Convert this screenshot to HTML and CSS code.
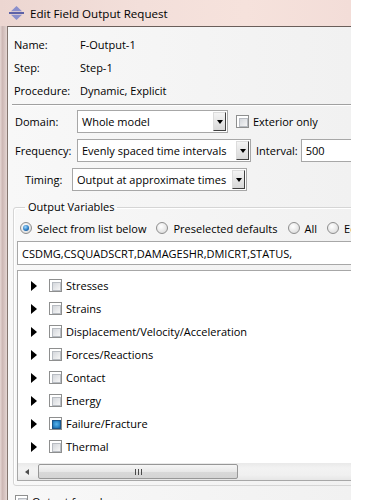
FILE: index.html
```html
<!DOCTYPE html>
<html>
<head>
<meta charset="utf-8">
<link rel="stylesheet" href="styles.css">
</head>
<body>
<div class="window">
  <div class="titlebar">
    <svg class="title-icon" width="15" height="14" viewBox="0 0 15 14">
      <path d="M7.5 0 L13 5.2 H2 Z" fill="#8a8fcc"/>
      <rect x="0" y="6" width="15" height="2" fill="#5d62a8"/>
      <path d="M2 8.8 H13 L7.5 14 Z" fill="#8a8fcc"/>
    </svg>
    <span class="title-text">Edit Field Output Request</span>
  </div>
  <div class="body">
    <div class="frame-left"></div>
    <div class="client">
      <div class="info">
        <div class="info-row"><span class="info-lbl">Name:</span><span>F-Output-1</span></div>
        <div class="info-row"><span class="info-lbl">Step:</span><span>Step-1</span></div>
        <div class="info-row"><span class="info-lbl">Procedure:</span><span>Dynamic, Explicit</span></div>
      </div>
      <div class="sep"></div>
      <div class="form">
        <div class="form-row row-domain">
          <span class="lbl lbl-wide">Domain:</span>
          <div class="select sel-domain"><span>Whole model</span><span class="arrow"></span></div>
          <span class="cb cb-ext"></span><span class="cb-text">Exterior only</span>
        </div>
        <div class="form-row row-freq">
          <span class="lbl lbl-wide">Frequency:</span>
          <div class="select sel-freq"><span>Evenly spaced time intervals</span><span class="arrow"></span></div>
          <span class="interval-lbl">Interval:</span>
          <div class="input interval">500</div>
        </div>
        <div class="form-row row-timing">
          <span class="lbl lbl-narrow">Timing:</span>
          <div class="select sel-timing"><span>Output at approximate times</span><span class="arrow"></span></div>
        </div>
      </div>
      <fieldset class="group">
        <legend class="group-title">Output Variables</legend>
        <div class="radios">
          <span class="radio on"></span><span class="radio-text">Select from list below</span>
          <span class="radio"></span><span class="radio-text">Preselected defaults</span>
          <span class="radio"></span><span class="radio-text">All</span>
          <span class="radio"></span><span class="radio-text">Edit variables</span>
        </div>
        <div class="input vars">CSDMG,CSQUADSCRT,DAMAGESHR,DMICRT,STATUS,</div>
        <div class="tree">
          <div class="tree-items">
            <div class="tree-row"><span class="tri"></span><span class="cb"></span><span class="tree-text">Stresses</span></div>
            <div class="tree-row"><span class="tri"></span><span class="cb"></span><span class="tree-text">Strains</span></div>
            <div class="tree-row"><span class="tri"></span><span class="cb"></span><span class="tree-text">Displacement/Velocity/Acceleration</span></div>
            <div class="tree-row"><span class="tri"></span><span class="cb"></span><span class="tree-text">Forces/Reactions</span></div>
            <div class="tree-row"><span class="tri"></span><span class="cb"></span><span class="tree-text">Contact</span></div>
            <div class="tree-row"><span class="tri"></span><span class="cb"></span><span class="tree-text">Energy</span></div>
            <div class="tree-row"><span class="tri"></span><span class="cb partial"></span><span class="tree-text">Failure/Fracture</span></div>
            <div class="tree-row"><span class="tri"></span><span class="cb"></span><span class="tree-text">Thermal</span></div>
            <div class="tree-row"><span class="tri"></span><span class="cb"></span><span class="tree-text">Volume/Thickness/Coordinates</span></div>
          </div>
          <div class="hscroll">
            <span class="sb-btn"><span class="sb-left"></span></span>
            <span class="thumb"><span class="grip"></span></span>
          </div>
        </div>
      </fieldset>
      <div class="rebar"><span class="cb"></span><span class="cb-text">Output for rebar</span></div>
    </div>
  </div>
</div>
</body>
</html>
```
FILE: styles.css
```css
* { box-sizing: border-box; }
html, body { margin: 0; padding: 0; background: #fff; }
body {
  width: 376px;
  height: 500px;
  overflow: hidden;
  font-family: "Open Sans", "Noto Sans", sans-serif;
  font-size: 11px;
  color: #000;
}
.window {
  width: 351px;
  height: 500px;
  display: flex;
  flex-direction: column;
  overflow: hidden;
}
.titlebar {
  height: 26px;
  flex: none;
  display: flex;
  align-items: center;
  background: linear-gradient(90deg, #ecd6d1 0%, #f3dfda 40%, #f6e2dc 70%, #f3ddd8 100%);
}
.title-icon { margin-left: 9px; flex: none; }
.title-text { margin-left: 6px; font-size: 11.6px; }
.body { flex: 1; display: flex; min-height: 0; }
.frame-left {
  width: 7px;
  flex: none;
  background: linear-gradient(90deg, #e6d7d4 0%, #cdb8b5 35%, #d9c7c4 70%, #e4d6d3 100%);
}
.client {
  flex: 1;
  min-width: 0;
  border-left: 1px solid #82756f;
  border-top: 1px solid #6a5e5a;
  background: linear-gradient(90deg, #f8f8f8, #f1f1f1);
  overflow: hidden;
}
.info { padding: 6px 0 0 6px; }
.info-row { height: 23px; display: flex; align-items: center; white-space: nowrap; }
.info-lbl { width: 66px; flex: none; }
.sep {
  margin: 2px 0 0 4px;
  height: 2px;
  border-top: 1px solid #a0a0a0;
  border-bottom: 1px solid #fff;
}
.form { margin-top: 4px; display: flex; flex-direction: column; gap: 6px; }
.form-row { height: 23px; display: flex; align-items: center; white-space: nowrap; }
.row-domain, .row-freq { padding-left: 7px; }
.row-timing { padding-left: 17px; }
.lbl-wide { width: 62px; flex: none; }
.lbl-narrow { width: 47px; flex: none; }
.select {
  height: 23px;
  flex: none;
  border: 1px solid #a7a7a7;
  background: #fff;
  display: flex;
  align-items: center;
  padding-left: 4px;
}
.sel-domain { width: 151px; }
.sel-freq { width: 174px; }
.sel-timing { width: 175px; }
.arrow {
  margin-left: auto;
  margin-right: 1px;
  width: 13px;
  height: 19px;
  border: 1px solid;
  border-color: #dcdcdc #404040 #404040 #dcdcdc;
  background: linear-gradient(#f4f4f4, #d8d8d8);
  display: flex;
  align-items: center;
  justify-content: center;
}
.arrow::before {
  content: "";
  border-left: 3.5px solid transparent;
  border-right: 3.5px solid transparent;
  border-top: 4px solid #000;
}
.cb {
  width: 13px;
  height: 13px;
  flex: none;
  border: 1px solid #8e8f8f;
  background: #fff;
  padding: 2px;
  display: inline-block;
}
.cb::after {
  content: "";
  display: block;
  width: 100%;
  height: 100%;
  border: 1px solid #b8bcc2;
  background: linear-gradient(135deg, #d4d7dc, #f6f6f6);
}
.cb.partial::after {
  border-color: #1b5589;
  background: radial-gradient(circle at 50% 45%, #5ab4ea 0, #2a86c8 60%, #1a5c98 100%);
}
.cb-ext { margin-left: 8px; }
.cb-text { margin-left: 4px; }
.interval-lbl { margin-left: 5px; }
.input {
  height: 23px;
  border: 1px solid #a7a7a7;
  background: #fff;
  display: flex;
  align-items: center;
  padding-left: 4px;
  white-space: nowrap;
}
.interval { margin-left: 3px; width: 80px; flex: none; }
.group {
  margin: 9px 0 0 5px;
  width: 360px;
  padding: 6px 0 4px 3px;
  border: 1px solid #d5d5d5;
  border-radius: 3px;
  box-shadow: inset 1px 1px 0 #fff;
  min-width: 0;
}
.group-title {
  margin-left: 8px;
  padding: 0 3px;
  line-height: 14px;
}
.radios { height: 16px; display: flex; align-items: center; padding-left: 3px; white-space: nowrap; }
.radio {
  width: 12px;
  height: 12px;
  flex: none;
  border-radius: 50%;
  border: 1px solid #8e8e8e;
  background: radial-gradient(circle at 40% 35%, #fff 0, #e6e6e6 60%, #cfcfcf 100%);
  display: flex;
  align-items: center;
  justify-content: center;
}
.radio.on::after {
  content: "";
  width: 6px;
  height: 6px;
  border-radius: 50%;
  background: radial-gradient(circle at 40% 35%, #a6dcff 0, #2a7cc4 55%, #0f3f78 100%);
}
.radio-text { margin-left: 5px; margin-right: 10px; }
.radio-text:first-of-type { margin-right: 9px; }
.vars { margin-top: 5px; height: 24px; }
.tree {
  margin-top: 5px;
  height: 211px;
  border: 1px solid #a7a7a7;
  background: #fff;
  display: flex;
  flex-direction: column;
}
.tree-items { flex: 1; min-height: 0; overflow: hidden; padding-top: 3px; }
.tree-row { height: 23px; display: flex; align-items: center; padding-left: 13px; white-space: nowrap; }
.tri {
  width: 0;
  height: 0;
  flex: none;
  border-top: 5px solid transparent;
  border-bottom: 5px solid transparent;
  border-left: 6px solid #000;
}
.tree-row .cb { margin-left: 12px; }
.tree-text { margin-left: 4px; }
.hscroll {
  height: 17px;
  flex: none;
  display: flex;
  align-items: center;
  background: linear-gradient(#e9e9e9, #f2f2f2 30%, #f0f0f0 70%, #e6e6e6);
}
.sb-btn { width: 17px; height: 17px; flex: none; display: flex; align-items: center; justify-content: center; }
.sb-left {
  width: 0;
  height: 0;
  border-top: 3.5px solid transparent;
  border-bottom: 3.5px solid transparent;
  border-right: 4px solid #4d4d4d;
}
.thumb {
  margin-left: 3px;
  width: 200px;
  height: 15px;
  border: 1px solid #979797;
  border-radius: 2px;
  background: linear-gradient(#f6f6f6, #e8e8e8 50%, #d9d9d9 51%, #d4d4d4);
  display: flex;
  align-items: center;
  justify-content: center;
}
.grip {
  width: 7px;
  height: 6px;
  background: repeating-linear-gradient(90deg, #4a4a4a 0 1px, transparent 1px 3px);
}
.rebar { margin: 9px 0 0 7px; display: flex; align-items: flex-start; white-space: nowrap; }
.rebar .cb-text { margin-left: 4px; line-height: 14px; }
```
